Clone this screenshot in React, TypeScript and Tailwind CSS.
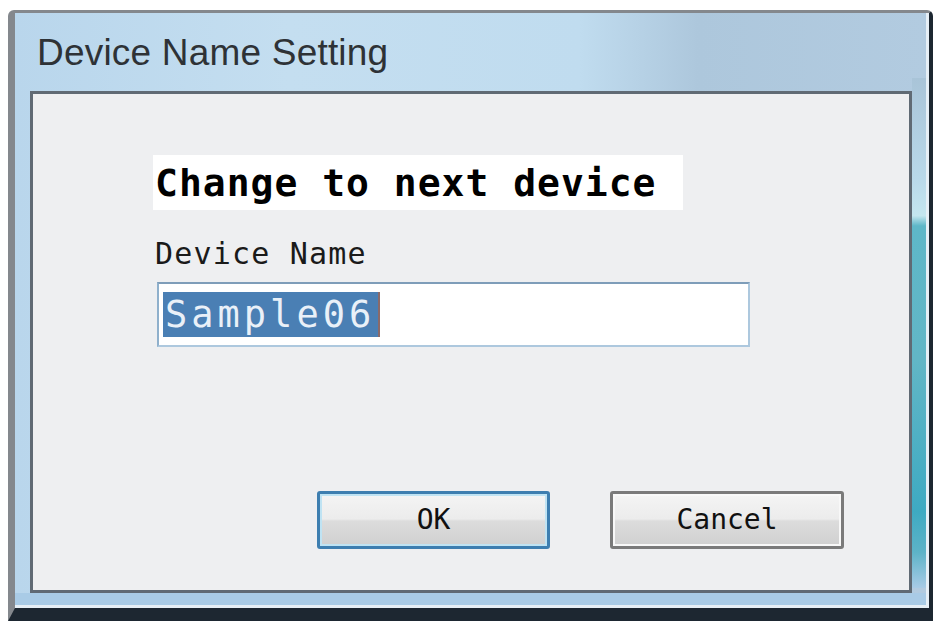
import React from 'react';

// Windows 7 style dialog "Device Name Setting"
function TitleBar() {
  return (
    <div className="h-[78px] flex items-center pl-[22px]">
      <span className="text-[37px] leading-none text-[#2e3236] tracking-[0.2px] font-['Liberation_Sans',Arial,sans-serif]">
        Device Name Setting
      </span>
    </div>
  );
}

function DialogButton({ label, primary }: { label: string; primary?: boolean }) {
  return (
    <button
      className={
        'h-[58px] rounded-[3px] border-[3px] flex items-center justify-center ' +
        'bg-[linear-gradient(to_bottom,#f4f4f4_0%,#ececec_48%,#dcdcdc_52%,#d0d0d0_100%)] ' +
        "text-[28px] text-[#111] font-['DejaVu_Sans_Mono',monospace] " +
        (primary
          ? 'w-[233px] border-[#3d7eb0] shadow-[inset_0_0_0_2px_#bfe3f3]'
          : 'w-[234px] border-[#7a7a7a] shadow-[inset_0_0_0_2px_#f8f8f8]')
      }
    >
      {label}
    </button>
  );
}

function ClientArea() {
  return (
    <div className="h-[502px] ml-[15px] mr-[14px] border-[3px] border-[#606a74] bg-[#eeeff1] flex flex-col">
      <div className="mt-[61px] ml-[120px] w-[530px] h-[55px] bg-white flex items-center pl-[2px]">
        <span className="text-[38px] leading-none font-bold tracking-[1px] text-black font-['DejaVu_Sans_Mono',monospace]">
          Change to next device
        </span>
      </div>
      <div className="mt-[27px] ml-[122px] text-[30px] leading-[34px] tracking-[1.2px] text-[#1a1a1a] font-['DejaVu_Sans_Mono',monospace]">
        Device Name
      </div>
      <div className="mt-[11px] ml-[124px] w-[593px] h-[65px] bg-white border-2 border-[#adc8de] border-t-[#7e9db9] border-l-[#8fb0cc] flex items-center pl-[4px]">
        <span className="h-[45px] flex items-center bg-[#4a7fb4] pl-[2px] pr-[3px] text-[37px] leading-none tracking-[4px] text-[#e9f0f8] font-['DejaVu_Sans_Mono',monospace] border-r-2 border-[#8a6a6a]">
          Sample06
        </span>
      </div>
      <div className="mt-[144px] ml-[284px] flex gap-[60px]">
        <DialogButton label="OK" primary />
        <DialogButton label="Cancel" />
      </div>
    </div>
  );
}

export default function App() {
  return (
    <div className="w-[941px] h-[621px] bg-white overflow-hidden">
      <div className="ml-[8px] mt-[10px] w-[925px] h-[611px] rounded-t-[6px] border-l-[7px] border-t-[3px] border-r-[4px] border-b-[13px] border-[#84888d] border-r-[#1d2731] border-b-[#1d2731]">
        <div className="h-full border-r-[3px] border-b-[3px] border-[#e6eff6] bg-[linear-gradient(to_right,#b9d6ec_0%,#c4def0_30%,#c0dcef_62%,#adc7dc_75%,#b2cbe0_100%)] flex flex-col relative">
          <TitleBar />
          <ClientArea />
          <div className="flex-1 bg-[#a9cbe6]" />
          {/* teal glow on the right glass edge */}
          <div className="absolute right-0 top-[65px] w-[14px] h-[510px] bg-[linear-gradient(to_bottom,#a9c4d8_0%,#b9d9ea_20%,#c4e6ef_27%,#5eb7c8_29%,#62b6c6_55%,#3eaac2_85%,#5db3c8_93%,#a8cbe6_100%)]" />
        </div>
      </div>
    </div>
  );
}
